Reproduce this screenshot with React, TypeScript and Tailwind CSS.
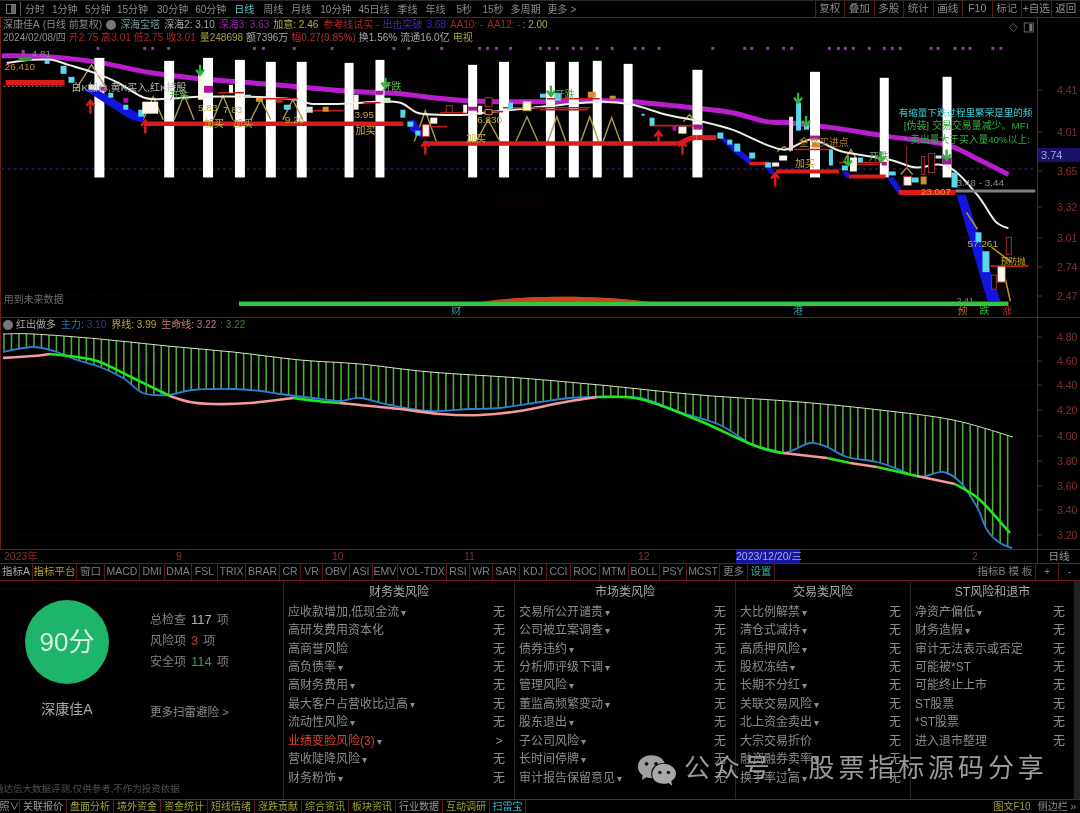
import React from "react";

type P = [number, number];

function smooth(p: P[]): string {
  let d = `M${p[0][0]} ${p[0][1]}`;
  for (let i = 0; i < p.length - 1; i++) {
    const a = p[Math.max(i - 1, 0)], b = p[i], c = p[i + 1], e = p[Math.min(i + 2, p.length - 1)];
    const c1x = b[0] + (c[0] - a[0]) / 6, c1y = b[1] + (c[1] - a[1]) / 6;
    const c2x = c[0] - (e[0] - b[0]) / 6, c2y = c[1] - (e[1] - b[1]) / 6;
    d += `C${c1x.toFixed(1)} ${c1y.toFixed(1)} ${c2x.toFixed(1)} ${c2y.toFixed(1)} ${c[0]} ${c[1]}`;
  }
  return d;
}

function at(p: P[], x: number): number {
  if (x <= p[0][0]) return p[0][1];
  for (let i = 0; i < p.length - 1; i++) {
    if (x <= p[i + 1][0]) {
      const t = (x - p[i][0]) / (p[i + 1][0] - p[i][0]);
      return p[i][1] + t * (p[i + 1][1] - p[i][1]);
    }
  }
  return p[p.length - 1][1];
}

const magenta: P[] = [[0,56],[20,56],[50,57],[100,63],[150,73],[200,79],[250,83],[297,87],[343,91],[380,93],[400,94],[433,98],[467,101],[507,102],[547,102],[600,101],[633,102],[693,108],[733,113],[767,122],[790,123],[833,128],[890,137],[947,145],[980,160],[1010,175]];
const whiteLine: P[] = [[5,63],[30,60],[50,60],[67,65],[93,73],[117,83],[143,98],[167,99],[197,97],[250,97],[297,100],[310,104],[343,104],[377,102],[400,103],[417,113],[437,115],[467,115],[493,112],[533,108],[600,102],[633,105],[667,115],[703,122],[733,130],[767,145],[787,150],[813,140],[843,152],[890,160],[917,168],[940,165],[957,172],[980,197],[997,222],[1010,229]];

const bars: [number, number, number][] = [[93,10,58],[163,10,61],[202,10,58],[234,10,60],[265,10,62],[296,10,62],[344,9,63],[375,9,60],[468,9,65],[499,10,62],[546,9,62],[569,10,62],[593,9,61],[624,9,64],[693,10,70],[811,10,72],[881,9,78],[944,9,77]];

const dots = [96,143,151,167,253,262,293,331,393,408,441,479,487,496,510].concat([0,25,50,95,118,165,208,275,298,345,503,595,617,662,710,732,842,868,890,912,958,1002,1025,1048,1137,1160,1207,1230,1252,1318,1343].map((v) => Math.round(540 + v / 2.904)));

const thickRed: [number, number, number, number, number][] = [
  [4,83,63,83,5.5],[143,124,403,124,4.5],[423,144,678,144,4.5],[697,138,717,138,5],[750,164,770,164,3.5],
  [777,172,840,172,4],[850,177,887,177,4],[900,193,957,193,5],
];
const thinRed: [number, number, number, number][] = [
  [217,93,243,93],[257,99,297,99],[305,111,343,111],[363,103,380,103],[423,127,447,127],[440,113,467,113],[483,112,503,112],[503,108,590,108],[547,99,600,99],[650,126,700,126],[795,150,833,150],[858,165,880,165],[840,163,888,163],[992,267,1030,267],[540,110,588,110],
];

type C = [number, number, number, number, string, string?];
const cy = "#58d8e8", wh = "#fff6ea", mg = "#a8159c", rd = "#b02a2a", or = "#d8902a";
const candles: C[] = [
  [17,57,13,4,"#2a9a2a"],[20,50,3,8,"#a040a0"],
  [43,60,5,4,cy],[59,66,6,8,cy],[67,77,6,6,cy],[98,87,7,4,mg],[87,85,7,5,wh],[107,93,5,5,cy],[122,105,5,5,cy],[137,110,6,7,cy],[122,98,5,5,mg],
  [141,102,16,12,wh],[197,73,5,27,wh],[203,86,9,7,mg],[228,85,4,8,wh],[243,95,7,3,"#d0d0d0"],[255,98,7,4,or],[275,98,7,5,rd],[283,105,7,5,cy],
  [305,107,7,6,"#d0e8d0"],[322,107,6,5,or],[353,95,5,15,wh],[375,91,8,4,mg],[383,98,7,5,"#c0f0c0"],[400,110,5,8,cy],[407,122,6,5,cy],[415,131,5,5,cy],
  [422,125,7,12,wh,"#c03030"],[430,118,7,6,wh],[446,106,6,7,"#000","#b03030"],[463,105,4,8,wh],[468,107,9,4,mg],[478,106,4,9,wh],[485,110,7,5,"#000",or],[485,98,7,9,"#000","#b03030"],
  [508,103,5,7,cy],[523,102,8,9,wh,"#c8b030"],[540,94,6,4,cy],[555,93,6,8,cy],[588,92,8,6,or],[610,96,6,3,or],
  [642,114,3,2,cy],[650,118,5,8,cy],[673,126,4,5,mg],[679,127,8,7,wh],[694,125,9,5,mg],[718,133,6,6,cy],[728,140,5,5,cy],[735,144,6,8,cy],[750,153,6,6,cy],[766,163,6,5,cy],[773,163,7,4,wh],[780,156,8,5,wh],
  [790,117,4,34,"#f0d8e0"],[797,103,5,28,cy],[805,126,5,4,cy],[811,136,10,4,mg],[813,143,8,5,or],[830,150,4,16,cy],[843,166,6,5,cy],[851,158,7,14,wh],[859,158,5,5,cy],[883,163,5,3,mg],[890,172,7,4,cy],
  [905,177,8,9,wh,"#b03030"],[913,178,7,5,cy],[922,177,6,8,"#c89030"],[930,154,6,19,"#000","#a03030"],[923,157,3,18,"#000","#a03030"],[937,156,6,3,"#d0f0f0"],[944,158,9,7,mg],[953,173,6,15,cy],
  [977,233,6,10,cy],[984,252,7,21,cy],[999,267,8,16,wh,"#b03030"],[1008,238,5,17,"#000","#a03030"],[993,276,5,14,"#000","#a03030"],
];

const triangles: [number, number, number, number][] = [
  [90,65,74,90],[152,97,142,120],[183,95,173,120],[222,96,212,120],[260,100,250,120],[292,100,282,120],[425,111,414,142],[488,120,476,142],[527,117,516,142],[557,117,548,142],[590,117,581,142],[612,118,603,143],[690,115,684,122],[785,147,778,152],[852,150,846,160],[908,168,902,175],
];

const arrowsRed: P[] = [[89,107],[144,127],[425,148],[659,138],[683,148],[776,180]];
const arrowsGreen: P[] = [[199,71],[385,84],[551,92],[799,99],[807,122],[882,158],[948,156],[849,162]];

const blueWedges: string[] = [
  "83,90 96,90 143,117 141,123 128,119",
  "407,121 414,120 423,134 420,138 410,131",
  "720,138 725,138 753,160 750,165 735,153",
  "763,164 769,164 776,173 772,175",
  "843,172 849,172 853,178 848,179",
  "888,178 895,178 905,193 899,194",
  "958,195 967,195 1002,302 989,302",
];

const labels: [number, number, string, string, number][] = [
  [30,57,"4.81","#8a8a8a",10],[3,70,"26.410","#c88a50",10],[70,91,"白K加仓,黄K买入,红K持股","#b8b8b8",10],
  [168,99,"开跌","#58b058",10],[381,90,"开跌","#58b058",10],[555,98,"开跌","#58b058",10],
  [197,111,"5.83","#c8b040",10],[222,113,"7.83","#c8b040",10],[284,123,"9.26","#c8b040",10],[354,118,"3.95","#c8b040",10],[477,123,"6.830","#c8b040",10],
  [203,127,"加买","#c8b040",10],[232,127,"加买","#c8b040",10],[355,134,"加买","#c8b040",10],[466,142,"加买","#c8b040",10],[796,168,"加买","#c8a040",10],[800,146,"金叉买进点","#b08030",10],[870,160,"开跌","#58b058",10],
  [900,116,"有缩量下跌过程里繁荣是里的频","#3fd0d8",9.6],[905,129,"[伪装] 交易交易量减少。MFI","#30b040",10],[905,143,"* 卖出量大于买入量40%以上:","#30b040",9.8],
  [958,187,"3.48 - 3.44","#909090",10],[922,196,"23.007","#c8a040",10],[969,248,"57.261","#b8b040",10],[1002,265,"预防抛","#d0b020",8.5],[2,304,"用到未来数据","#6a6a6a",10],[958,305,"2.41","#808080",9],
];

function MainChart() {
  return (
    <svg viewBox="0 18 1037 300" className="block w-[1037px] h-[299px] shrink-0">
      {[90,132,207,238,267,296].map((y) => (
        <line key={y} x1={0} x2={1037} y1={y} y2={y} stroke="#2e0c0c" strokeDasharray="1 3" />
      ))}
      <line x1={0} x2={1037} y1={169.5} y2={169.5} stroke="#3c2c80" strokeDasharray="3 3" />
      <line x1={2} x2={63} y1={86.5} y2={86.5} stroke="#b08a8a" strokeDasharray="2 2" />
      {dots.map((x, i) => (
        <rect key={i} x={x - 1} y={47} width={3} height={3} fill="#8a3a9a" />
      ))}
      <path d={smooth(magenta)} fill="none" stroke="#b81ecc" strokeWidth={5} />
      {bars.map(([x, w, t]) => (
        <rect key={x} x={x} y={t} width={w} height={178 - t} fill="#ffffff" />
      ))}
      {triangles.map(([x, t, l, b], i) => (
        <path key={i} d={`M${l} ${b}L${x} ${t}L${2 * x - l} ${b}`} fill="none" stroke="#a89a50" strokeWidth={1.4} />
      ))}
      {blueWedges.map((w) => (
        <polygon key={w} points={w} fill="#1414e0" />
      ))}
      <path d={smooth(whiteLine)} fill="none" stroke="#f0f0e8" strokeWidth={2} />
      {thinRed.map(([a, b, c, d], i) => (
        <line key={i} x1={a} y1={b} x2={c} y2={d} stroke="#c02020" strokeWidth={1.6} />
      ))}
      {thickRed.map(([a, b, c, d, w], i) => (
        <line key={i} x1={a} y1={b} x2={c} y2={d} stroke="#dc1c1c" strokeWidth={w} />
      ))}
      <path d="M678 144 C686 143 686 138 697 138" fill="none" stroke="#dc1c1c" strokeWidth={5} />
      <line x1={957} y1={191.5} x2={1037} y2={191.5} stroke="#808080" strokeWidth={3} />
      <path d="M908 147V170" stroke="#8a3030" strokeWidth={1} />
      <path d="M968 213L979 230M993 248L1013 263M1007 280L1012 302" fill="none" stroke="#b89020" strokeWidth={1.6} />
      {candles.map(([x, y, w, h, f, s], i) => (
        <rect key={i} x={x} y={y} width={w} height={h} fill={f} stroke={s ?? "none"} strokeWidth={s ? 1 : 0} />
      ))}
      {arrowsRed.map(([x, y]) => (
        <path key={x} d={`M${x} ${y + 7}V${y - 5}M${x - 4} ${y - 1}L${x} ${y - 6}L${x + 4} ${y - 1}`} fill="none" stroke="#dc1c1c" strokeWidth={2.4} />
      ))}
      {arrowsGreen.map(([x, y]) => (
        <path key={x} d={`M${x} ${y - 6}V${y + 3}M${x - 4} ${y - 1}L${x} ${y + 4}L${x + 4} ${y - 1}`} fill="none" stroke="#30b040" strokeWidth={2.4} />
      ))}
      <path d="M480 304C520 295.5 600 295.5 655 304Z" fill="#c8481c" />
      <rect x={238} y={302.5} width={772} height={4.5} fill="#30c838" />
      <path d="M480 303C520 296 600 296 650 303Z" fill="#c8481c" />
      {labels.map(([x, y, t, c, s]) => (
        <text key={t + x} x={x} y={y} fill={c} fontSize={s}>{t}</text>
      ))}
      {[[451,"财","#3a9a9a"],[794,"港","#3a9a9a"],[959,"预","#c8702a"],[981,"跌","#30b040"],[1004,"涨","#c02a2a"]].map(([x, t, c]) => (
        <text key={t as string} x={x as number} y={315} fill={c as string} fontSize={10}>{t}</text>
      ))}
      <path d="M1015 23.5L1019 27.5L1015 31.5L1011 27.5Z" fill="none" stroke="#555" />
      <rect x={1026} y={23} width={9} height={9} fill="none" stroke="#666" />
      <rect x={1031} y={24} width={3} height={7} fill="#777" />
    </svg>
  );
}

const env: P[] = [[3,334],[33,334],[100,339],[167,346],[233,352],[300,360],[360,364],[430,372],[520,378],[600,385],[700,395],[800,402],[880,410],[953,420],[1013,437]];
const blue: P[] = [[3,352],[33,347],[57,352],[77,360],[100,367],[123,378],[143,393],[167,395],[193,390],[233,389],[260,391],[280,394],[313,398],[340,401],[360,398],[390,405],[430,411],[470,409],[500,408],[540,402],[570,398],[600,397],[640,398],[680,412],[720,425],[753,445],[783,453],[810,443],[827,447],[847,457],[877,462],[900,470],[920,477],[943,472],[960,482],[977,507],[987,530],[1000,543],[1012,548]];
const pinkA: P[][] = [
  [[3,358],[33,356],[50,354]],
  [[170,396],[190,402],[213,404],[250,403],[293,398]],
  [[340,403],[360,405],[400,409],[440,414],[480,415],[520,411],[560,403],[597,397]],
  [[783,453],[827,458]],
  [[850,463],[877,467]],
  [[917,476],[955,484]],
];
const greenA: P[][] = [
  [[50,354],[77,357],[100,362],[133,378],[170,396]],
  [[293,398],[317,401],[340,403]],
  [[597,397],[640,399],[700,421],[753,445],[783,453]],
  [[827,458],[850,463]],
  [[877,467],[917,476]],
  [[955,484],[980,500],[1010,533]],
];
const barXs: number[] = Array.from({ length: 135 }, (_, i) => 4 + i * 7.49);

function LowerChart() {
  return (
    <svg viewBox="0 318 1037 231" className="block w-[1037px] h-[231px] shrink-0">
      {[337,361,385,410,436,461,486,510,535].map((y) => (
        <line key={y} x1={0} x2={1037} y1={y} y2={y} stroke="#2e0c0c" strokeDasharray="1 3" />
      ))}
      {barXs.map((x) => (
        <line key={x} x1={x} x2={x} y1={at(env, x)} y2={at(blue, x)} stroke="#52a63c" strokeWidth={1.6} />
      ))}
      <path d={smooth(env)} fill="none" stroke="#d8e8c0" strokeWidth={1} />
      <path d={smooth(blue)} fill="none" stroke="#2a80d0" strokeWidth={1.8} />
      {pinkA.map((p, i) => (
        <path key={i} d={smooth(p)} fill="none" stroke="#f49a9a" strokeWidth={2.6} />
      ))}
      {greenA.map((p, i) => (
        <path key={i} d={smooth(p)} fill="none" stroke="#20e820" strokeWidth={2.6} />
      ))}
    </svg>
  );
}

function Axis({ box, ticks, h }: { box: string; ticks: [number, string][]; h: string }) {
  return (
    <svg viewBox={box} className={`block w-[42px] shrink-0 ${h}`}>
      {ticks.map(([y, t]) => (
        <g key={t}>
          <line x1={0} x2={4} y1={y} y2={y} stroke="#7a2020" />
          <text x={19} y={y + 4} fill="#86302e" fontSize={10.5}>{t}</text>
        </g>
      ))}
    </svg>
  );
}

const topL: [string, string, string?][] = [
  ["分时","ml-[4px]"],["1分钟","ml-[7px]"],["5分钟","ml-[7.4px]"],["15分钟","ml-[6.4px]"],["30分钟","ml-[9px]"],["60分钟","ml-[7px]"],["日线","ml-[8px]","text-[#5ac8c8]"],["周线","ml-[9px]"],["月线","ml-[8px]"],["10分钟","ml-[9px]"],["45日线","ml-[7px]"],["季线","ml-[8px]"],["年线","ml-[8px]"],["5秒","ml-[11px]"],["15秒","ml-[10.4px]"],["多周期","ml-[7px]"],["更多 >","ml-[7px]"],
];
const topR = ["复权","叠加","多股","统计","画线","F10","标记","+自选","返回"];

const tabs: [string, string, string?][] = [
  ["指标A","w-[33px]","text-[#a8a8a8]"],["指标平台","w-[44px]","text-[#b0a030]"],["窗口","w-[28px]"],["MACD","w-[35px]"],["DMI","w-[25px]"],["DMA","w-[27px]"],["FSL","w-[26px]"],["TRIX","w-[28px]"],["BRAR","w-[34px]"],["CR","w-[21px]"],["VR","w-[22px]"],["OBV","w-[27px]"],["ASI","w-[23px]"],["EMV","w-[25px]"],["VOL-TDX","w-[49px]"],["RSI","w-[23px]"],["WR","w-[23px]"],["SAR","w-[27px]"],["KDJ","w-[27px]"],["CCI","w-[24px]"],["ROC","w-[29px]"],["MTM","w-[29px]"],["BOLL","w-[31px]"],["PSY","w-[27px]"],["MCST","w-[33px]"],["更多","w-[28px]"],["设置","w-[27px]","text-[#30b8a8]"],
];

const foot: [string, string, string][] = [
  ["照∨","w-[20px]","text-[#9a9a9a]"],["关联报价","w-[47px]","text-[#9a9a9a]"],["盘面分析","w-[47px]","text-[#a0a030]"],["境外资金","w-[47px]","text-[#a0a030]"],["资金统计","w-[47px]","text-[#a0a030]"],["短线情绪","w-[47px]","text-[#a0a030]"],["涨跌贡献","w-[47px]","text-[#a0a030]"],["综合资讯","w-[47px]","text-[#a0a030]"],["板块资讯","w-[47px]","text-[#a0a030]"],["行业数据","w-[47px]","text-[#9a9a9a]"],["互动调研","w-[47px]","text-[#a0a030]"],["扫雷宝","w-[36px]","text-[#30b8c8]"],
];

const D = "▾";
const cols: { title: string; w: string; rows: [string, boolean?][] }[] = [
  { title: "财务类风险", w: "w-[231px]", rows: [["应收款增加,低现金流",true],["高研发费用资本化"],["高商誉风险"],["高负债率",true],["高财务费用",true],["最大客户占营收比过高",true],["流动性风险",true],["业绩变脸风险(3)",true],["营收陡降风险",true],["财务粉饰",true]] },
  { title: "市场类风险", w: "w-[221px]", rows: [["交易所公开谴责",true],["公司被立案调查",true],["债券违约",true],["分析师评级下调",true],["管理风险",true],["董监高频繁变动",true],["股东退出",true],["子公司风险",true],["长时间停牌",true],["审计报告保留意见",true]] },
  { title: "交易类风险", w: "w-[175px]", rows: [["大比例解禁",true],["清仓式减持",true],["高质押风险",true],["股权冻结",true],["长期不分红",true],["关联交易风险",true],["北上资金卖出",true],["大宗交易折价"],["融资融券卖率",true],["换手率过高",true]] },
  { title: "ST风险和退市", w: "w-[164px]", rows: [["净资产偏低",true],["财务造假",true],["审计无法表示或否定"],["可能被*ST"],["可能终止上市"],["ST股票"],["*ST股票"],["进入退市整理"]] },
];

function Column({ c }: { c: (typeof cols)[number] }) {
  return (
    <div className={`${c.w} h-full shrink-0 border-l border-[#262626] flex flex-col`}>
      <div className="h-[21.5px] flex items-center justify-center text-[12px] text-[#a8a8a8]">{c.title}</div>
      {c.rows.map(([t, d]) => {
        const hot = t.startsWith("业绩");
        return (
          <div key={t} className="h-[18.45px] flex items-center justify-between pl-[4px] pr-[9px] text-[12px] text-[#8c8c8c]">
            <span className={hot ? "text-[#d8402a]" : ""}>
              {t}
              {d && <span className={`text-[10px] ml-[2px] ${hot ? "text-[#8c8c8c]" : ""}`}>{D}</span>}
            </span>
            <span className="w-[12px] text-center">{hot ? ">" : "无"}</span>
          </div>
        );
      })}
    </div>
  );
}

function Stat({ label, num, color }: { label: string; num: string; color: string }) {
  return (
    <div className="h-[21px] flex items-center gap-[5px] text-[12px] text-[#808080]">
      <span>{label}</span>
      <span className={`text-[13px] ${color}`}>{num}</span>
      <span>项</span>
    </div>
  );
}

export default function App() {
  return (
    <div className="relative w-[1080px] h-[813px] overflow-hidden bg-black flex flex-col blur-[0.45px] font-['Liberation_Sans','Noto_Sans_CJK_SC',sans-serif]">
      {/* top toolbar */}
      <div className="h-[18px] shrink-0 flex items-center border-t border-[#2a2a2a] border-b border-b-[#6e1c1c] text-[10px] text-[#8c8c8c]">
        <div className="ml-[6px] w-[10px] h-[10px] border border-[#777] flex justify-end">
          <div className="w-[4px] bg-[#666]" />
        </div>
        <div className="ml-[4px] w-px h-[14px] bg-[#555]" />
        {topL.map(([t, m, c]) => (
          <span key={t} className={`${m} whitespace-nowrap ${c ?? ""}`}>{t}</span>
        ))}
        <div className="ml-auto flex h-full">
          {topR.map((t) => (
            <span key={t} className="w-[29.5px] flex items-center justify-center border-l border-[#5a1818] whitespace-nowrap text-[10.5px]">{t}</span>
          ))}
        </div>
      </div>

      {/* main chart */}
      <div className="relative h-[300px] shrink-0 flex border-b border-[#6e1c1c]">
        <div className="w-[1px] bg-[#6e1c1c] shrink-0 -mr-[1px] z-10" />
        <MainChart />
        <div className="relative border-l border-[#6e1c1c]">
          <Axis h="h-[299px]" box="0 18 42 299" ticks={[[90,"4.41"],[132,"4.01"],[171,"3.65"],[207,"3.32"],[238,"3.01"],[267,"2.74"],[296,"2.47"]]} />
          <div className="absolute left-0 right-0 top-[130px] h-[14px] bg-[#1a1268] text-[#9aa4e0] text-[11px] leading-[14px] pl-[3px]">3.74</div>
        </div>
        <div className="absolute left-[3px] top-[1px] flex flex-col gap-[1px] text-[10px] leading-[12px] whitespace-nowrap">
          <div className="flex items-center text-[#8c8c8c]">
            <span>深康佳A</span>
            <span className="ml-[3px]">(日线 前复权)</span>
            <span className="ml-[4px] w-[10px] h-[10px] rounded-full bg-[#777]" />
            <span className="ml-[4px] text-[#7a9a9a]">深海宝塔</span>
            <span className="ml-[4px] text-[#a8a8a8]">深海2: 3.10</span>
            <span className="ml-[4px] text-[#9a20a8]">深海3: 3.63</span>
            <span className="ml-[4px] text-[#b8b040]">加意: 2.46</span>
            <span className="ml-[5px] text-[#a82828]">参考线试买 -</span>
            <span className="ml-[3px] text-[#4a20c0]">出击突破</span>
            <span className="ml-[4px] text-[#4a20c0]">3.68</span>
            <span className="ml-[4px] text-[#a82828]">AA10: -</span>
            <span className="ml-[4px] text-[#a82828]">AA12: -</span>
            <span className="ml-[2px] text-[#a8a850]">: 2.00</span>
          </div>
          <div className="flex items-center text-[#8c8c8c]">
            <span>2024/02/08/四</span>
            <span className="ml-[3px] text-[#a82828]">开2.75</span>
            <span className="ml-[3px] text-[#a82828]">高3.01</span>
            <span className="ml-[3px] text-[#a82828]">低2.75</span>
            <span className="ml-[3px] text-[#a82828]">收3.01</span>
            <span className="ml-[4px] text-[#a8a040]">量248698</span>
            <span className="ml-[3px] text-[#a8a8a8]">额7396万</span>
            <span className="ml-[3px] text-[#b03030]">幅0.27(9.85%)</span>
            <span className="ml-[3px] text-[#a8a8a8]">换1.56%</span>
            <span className="ml-[3px] text-[#a8a8a8]">流通16.0亿</span>
            <span className="ml-[3px] text-[#a8a040]">电视</span>
          </div>
        </div>
      </div>

      {/* lower chart */}
      <div className="relative h-[232px] shrink-0 flex border-b border-[#6e1c1c]">
        <div className="w-[1px] bg-[#6e1c1c] shrink-0 -mr-[1px] z-10" />
        <LowerChart />
        <div className="border-l border-[#6e1c1c]">
          <Axis h="h-[231px]" box="0 318 42 231" ticks={[[337,"4.80"],[361,"4.60"],[385,"4.40"],[410,"4.20"],[436,"4.00"],[461,"3.80"],[486,"3.60"],[510,"3.40"],[535,"3.20"]]} />
        </div>
        <div className="absolute left-[3px] top-[1px] flex items-center text-[10px] leading-[12px] whitespace-nowrap">
          <span className="w-[10px] h-[10px] rounded-full bg-[#777]" />
          <span className="ml-[3px] text-[#a8a8a8]">红出做多</span>
          <span className="ml-[5px] text-[#2a78c0]">主力:</span>
          <span className="ml-[3px] text-[#2a3a90]">3.10</span>
          <span className="ml-[5px] text-[#b8b040]">界线: 3.99</span>
          <span className="ml-[5px] text-[#c87a7a]">生命线: 3.22</span>
          <span className="ml-[4px] text-[#3a8a3a]">: 3.22</span>
        </div>
      </div>

      {/* date axis */}
      <div className="h-[14px] shrink-0 flex border-b border-[#6e1c1c] text-[10.5px] leading-[13px] text-[#86302e]">
        <div className="w-[1037px] shrink-0 flex items-center">
          <span className="ml-[4px] w-[172px]">2023年</span>
          <span className="w-[156px]">9</span>
          <span className="w-[132px]">10</span>
          <span className="w-[174px]">11</span>
          <span className="w-[98px]">12</span>
          <span className="w-[64px] bg-[#1a14a0] text-[#9ab0f0] whitespace-nowrap">2023/12/20/三</span>
          <span className="ml-[172px]">2</span>
        </div>
        <div className="flex-1 border-l border-[#6e1c1c] text-[#9a9a9a] text-center">日线</div>
      </div>

      {/* indicator tabs */}
      <div className="h-[17px] shrink-0 flex items-center border-b border-[#6e1c1c] text-[10.5px] text-[#808080]">
        {tabs.map(([t, w, c]) => (
          <span key={t} className={`${w} h-full flex items-center justify-center border-r border-[#5a1818] whitespace-nowrap ${c ?? ""}`}>{t}</span>
        ))}
        <div className="ml-auto flex h-full items-center">
          <span className="w-[60px] text-center whitespace-nowrap">指标B 模 板</span>
          <span className="w-[23px] h-full flex items-center justify-center border-l border-[#5a1818]">+</span>
          <span className="w-[22px] h-full flex items-center justify-center border-l border-[#5a1818]">-</span>
        </div>
      </div>

      {/* scan panel */}
      <div className="relative h-[218px] shrink-0 flex">
        <div className="w-[283px] shrink-0 flex flex-col">
          <div className="flex">
            <div className="w-[134px] shrink-0 pl-[25px] pt-[19px]">
              <div className="w-[84px] h-[84px] rounded-full bg-[#1fb46c] flex items-center justify-center text-[26px] text-[#d8f0e0]">90分</div>
              <div className="mt-[15px] w-[84px] text-center text-[14px] leading-[20px] text-[#a8a8a8] whitespace-nowrap">深康佳A</div>
            </div>
            <div className="pl-[16px] pt-[28px]">
              <Stat label="总检查" num="117" color="text-[#b0b0b0]" />
              <Stat label="风险项" num="3" color="text-[#c8402a]" />
              <Stat label="安全项" num="114" color="text-[#2f9a5a]" />
              <div className="mt-[30px] text-[11.5px] leading-[20px] text-[#8c8c8c] whitespace-nowrap">更多扫雷避险 &gt;</div>
            </div>
          </div>
          <div className="mt-auto pb-[3px] -ml-[6px] text-[9.5px] leading-[14px] text-[#505050] whitespace-nowrap">通达信大数据评测,仅供参考,不作为投资依据</div>
        </div>
        {cols.map((c) => (
          <Column key={c.title} c={c} />
        ))}
        <div className="flex-1 bg-[#222222]" />
        {/* watermark */}
        <div className="absolute left-[637px] top-[172px] flex items-center">
          <svg viewBox="0 0 42 34" className="w-[40px] h-[33px]">
            <path d="M15 1C7 1 1 6 1 13c0 4 2 7 5 9l-1 5 5-3c2 1 4 1 6 1-1-2-1-3-1-5 0-7 6-11 13-11h1C27 4 22 1 15 1Z" fill="#a0a0a0" />
            <path d="M28 10c-7 0-12 5-12 11s5 10 12 10c2 0 3 0 5-1l4 3-1-5c3-2 5-4 5-8 0-5-6-10-13-10Z" fill="#a8a8a8" />
            <circle cx="10" cy="10" r="2" fill="#111" />
            <circle cx="20" cy="10" r="2" fill="#111" />
            <circle cx="24" cy="19" r="1.8" fill="#111" />
            <circle cx="33" cy="19" r="1.8" fill="#111" />
          </svg>
          <span className="ml-[7px] -mt-[4px] text-[26px] tracking-[3.9px] text-[#9a9a9a] whitespace-nowrap">公众号 · 股票指标源码分享</span>
        </div>
      </div>

      {/* bottom tabs */}
      <div className="h-[14px] flex-1 flex items-center border-t border-[#6e1c1c] text-[10px] overflow-hidden">
        {foot.map(([t, w, c]) => (
          <span key={t} className={`${w} h-full flex items-center justify-center border-r border-[#5a1818] whitespace-nowrap ${c}`}>{t}</span>
        ))}
        <span className="ml-auto text-[#a0a030] whitespace-nowrap">图文F10</span>
        <span className="ml-[7px] mr-[4px] text-[#8c8c8c] whitespace-nowrap">侧边栏 »</span>
      </div>
    </div>
  );
}
